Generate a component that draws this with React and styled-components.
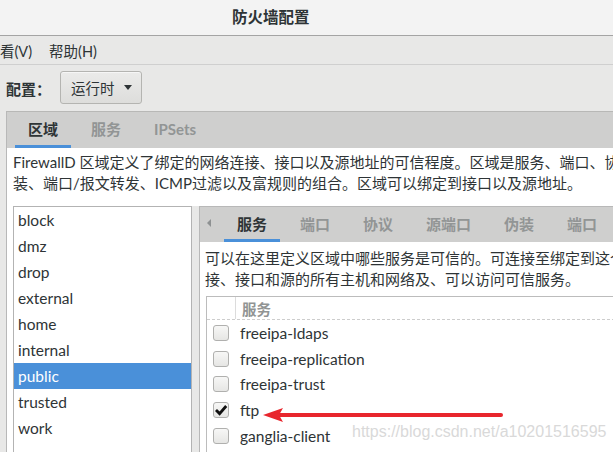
import React from "react"
import styled, { createGlobalStyle } from "styled-components"

const GlobalStyle = createGlobalStyle`
  html, body {
    margin: 0;
    padding: 0;
    overflow: hidden;
    background: #e8e8e7;
  }
  body {
    font-family: "Lato", "Noto Sans CJK SC", sans-serif;
    color: #2e3436;
  }
`

const zones = ["block", "dmz", "drop", "external", "home", "internal", "public", "trusted", "work"]
const services = [
  { name: "freeipa-ldaps", checked: false },
  { name: "freeipa-replication", checked: false },
  { name: "freeipa-trust", checked: false },
  { name: "ftp", checked: true },
  { name: "ganglia-client", checked: false },
]
const zoneTabs = ["服务", "端口", "协议", "源端口", "伪装", "端口"]

const App = () => (
  <Window>
    <GlobalStyle />
    <TitleBar>防火墙配置</TitleBar>
    <MenuBar>
      <MenuItem>看(V)</MenuItem>
      <MenuItem>帮助(H)</MenuItem>
    </MenuBar>
    <ConfigRow>
      <ConfigLabel>配置：</ConfigLabel>
      <Dropdown>
        运行时
        <Caret />
      </Dropdown>
    </ConfigRow>
    <Notebook>
      <TabBar $pad={8}>
        <Tab $active>区域</Tab>
        <Tab>服务</Tab>
        <Tab>IPSets</Tab>
      </TabBar>
      <Description $pad="4px 6px 0">
        <Line>FirewallD 区域定义了绑定的网络连接、接口以及源地址的可信程度。区域是服务、端口、协议、伪</Line>
        <Line>装、端口/报文转发、ICMP过滤以及富规则的组合。区域可以绑定到接口以及源地址。</Line>
      </Description>
      <Body>
        <LeftPane>
          <ZoneList>
            {zones.map(z => (
              <ZoneItem key={z} $selected={z === "public"}>{z}</ZoneItem>
            ))}
          </ZoneList>
        </LeftPane>
        <Handle />
        <RightPane>
          <TabBar $height={35}>
            <ScrollArrow>
              <svg width="4" height="8" viewBox="0 0 4 8">
                <polygon points="4,0 0,4 4,8" fill="#8e9192" />
              </svg>
            </ScrollArrow>
            {zoneTabs.map((t, i) => (
              <Tab key={i} $active={i === 0}>{t}</Tab>
            ))}
          </TabBar>
          <Description $pad="6px 5px 0">
            <Line>可以在这里定义区域中哪些服务是可信的。可连接至绑定到这个区域的连</Line>
            <Line>接、接口和源的所有主机和网络及、可以访问可信服务。</Line>
          </Description>
          <ServiceTable>
            <HeaderRow>
              <CheckHeader />
              <HeaderCell>服务</HeaderCell>
            </HeaderRow>
            {services.map(s => (
              <ServiceRow key={s.name}>
                <Checkbox>
                  {s.checked && (
                    <svg width="14" height="14" viewBox="0 0 14 14">
                      <path d="M2 7 L5.6 10.6 L12.2 3" fill="none" stroke="#111" strokeWidth="2.8" />
                    </svg>
                  )}
                </Checkbox>
                {s.name}
              </ServiceRow>
            ))}
          </ServiceTable>
        </RightPane>
      </Body>
    </Notebook>
    <Annotation width="242" height="20" viewBox="0 0 242 20">
      <line x1="14" y1="10" x2="238" y2="10" stroke="#e8262d" strokeWidth="4" strokeLinecap="round" />
      <polygon points="0,10 20,3 16,10 20,17" fill="#e8262d" />
    </Annotation>
    <Watermark>https://blog.csdn.net/a10201516595</Watermark>
  </Window>
)

export default App

const Window = styled.div`
  position: relative;
  width: 720px;
  height: 452px;
  overflow: hidden;
  background: #e8e8e7;
`

const TitleBar = styled.div`
  height: 36px;
  box-sizing: border-box;
  display: flex;
  align-items: center;
  padding: 0 0 3px 232px;
  background: #f3f3f3;
  border-bottom: 1px solid #a4a4a4;
  font-family: "Noto Sans CJK SC", sans-serif;
  font-weight: 700;
  font-size: 15.5px;
`

const MenuBar = styled.div`
  height: 29px;
  box-sizing: border-box;
  display: flex;
  align-items: center;
  gap: 17px;
  border-bottom: 1px solid #cfcfcf;
  font-size: 14.5px;
`

const MenuItem = styled.span``

const ConfigRow = styled.div`
  height: 46px;
  display: flex;
  align-items: center;
  padding-left: 6px;
`

const ConfigLabel = styled.span`
  font-family: "Noto Sans CJK SC", sans-serif;
  font-weight: 700;
  font-size: 15px;
  margin-right: 9px;
`

const Dropdown = styled.div`
  width: 82px;
  height: 33px;
  box-sizing: border-box;
  display: flex;
  align-items: center;
  padding-left: 10px;
  border: 1px solid #b4b4b1;
  border-radius: 3px;
  background: linear-gradient(#ebebea, #dddddb);
  box-shadow: inset 0 1px 0 #f6f6f6;
  font-size: 14.5px;
  margin-top: -2px;
`

const Caret = styled.span`
  width: 0;
  height: 0;
  margin-left: 9px;
  border-left: 4px solid transparent;
  border-right: 4px solid transparent;
  border-top: 5px solid #2e3436;
`

const Notebook = styled.div`
  margin-left: 6px;
  border-left: 1px solid #b8b8b8;
  border-top: 1px solid #b8b8b6;
  background: #fff;
  height: 400px;
  display: flex;
  flex-direction: column;
`

const TabBar = styled.div`
  height: ${p => p.$height || 36}px;
  flex-shrink: 0;
  display: flex;
  gap: 7px;
  padding-left: ${p => p.$pad || 0}px;
  background: #cfcfce;
`

const Tab = styled.div`
  display: flex;
  align-items: center;
  padding: 0 13px;
  border-bottom: 3px solid ${p => (p.$active ? "#4a90d9" : "transparent")};
  font-family: "Lato", "Noto Sans CJK SC", sans-serif;
  font-weight: 700;
  font-size: 15px;
  color: ${p => (p.$active ? "#2e3436" : "#929595")};
  white-space: nowrap;
`

const ScrollArrow = styled.div`
  width: 17px;
  display: flex;
  align-items: center;
  justify-content: center;
  padding-bottom: 3px;
`

const Description = styled.div`
  padding: ${p => p.$pad};
  font-size: 15px;
  line-height: 21px;
  white-space: nowrap;
  overflow: hidden;
`

const Line = styled.div``

const Body = styled.div`
  flex: 1;
  display: flex;
  margin-top: 12px;
`

const LeftPane = styled.div`
  width: 185px;
  padding-left: 6px;
  box-sizing: border-box;
  background: #fff;
`

const ZoneList = styled.div`
  height: 100%;
  box-sizing: border-box;
  border: 1px solid #b3b3b3;
  border-bottom: none;
`

const ZoneItem = styled.div`
  height: 26px;
  line-height: 26px;
  padding-left: 4px;
  font-size: 15.5px;
  background: ${p => (p.$selected ? "#4a90d9" : "transparent")};
  color: ${p => (p.$selected ? "#fff" : "#2e3436")};
`

const Handle = styled.div`
  width: 7px;
  background: #e8e8e7;
`

const RightPane = styled.div`
  flex: 1;
  display: flex;
  flex-direction: column;
  border-left: 1px solid #b8b8b8;
  border-top: 1px solid #b8b8b8;
  background: #fff;
`

const ServiceTable = styled.div`
  margin: 6px 0 0 6px;
  border-left: 1px solid #bcbcbc;
  border-top: 1px solid #bcbcbc;
  flex: 1;
`

const HeaderRow = styled.div`
  height: 22px;
  display: flex;
  border-bottom: 1px dashed #cdcdcd;
`

const CheckHeader = styled.div`
  width: 28px;
  border-right: 1px solid #dcdcdc;
`

const HeaderCell = styled.div`
  display: flex;
  align-items: center;
  padding-left: 6px;
  font-family: "Noto Sans CJK SC", sans-serif;
  font-weight: 700;
  font-size: 14.5px;
  color: #919494;
`

const ServiceRow = styled.div`
  height: 25.75px;
  display: flex;
  align-items: center;
  gap: 11px;
  padding-left: 6px;
  font-size: 15.5px;
`

const Checkbox = styled.div`
  width: 16px;
  height: 16px;
  box-sizing: border-box;
  display: flex;
  align-items: center;
  justify-content: center;
  border: 1px solid #b0b0ae;
  border-radius: 3px;
  background: linear-gradient(#f7f7f6, #e6e6e4);
`

const Annotation = styled.svg`
  position: absolute;
  left: 263px;
  top: 405px;
`

const Watermark = styled.div`
  position: absolute;
  left: 352px;
  top: 423px;
  font-family: "Liberation Sans", Arial, sans-serif;
  font-size: 16px;
  color: #d9d9d9;
  pointer-events: none;
`
